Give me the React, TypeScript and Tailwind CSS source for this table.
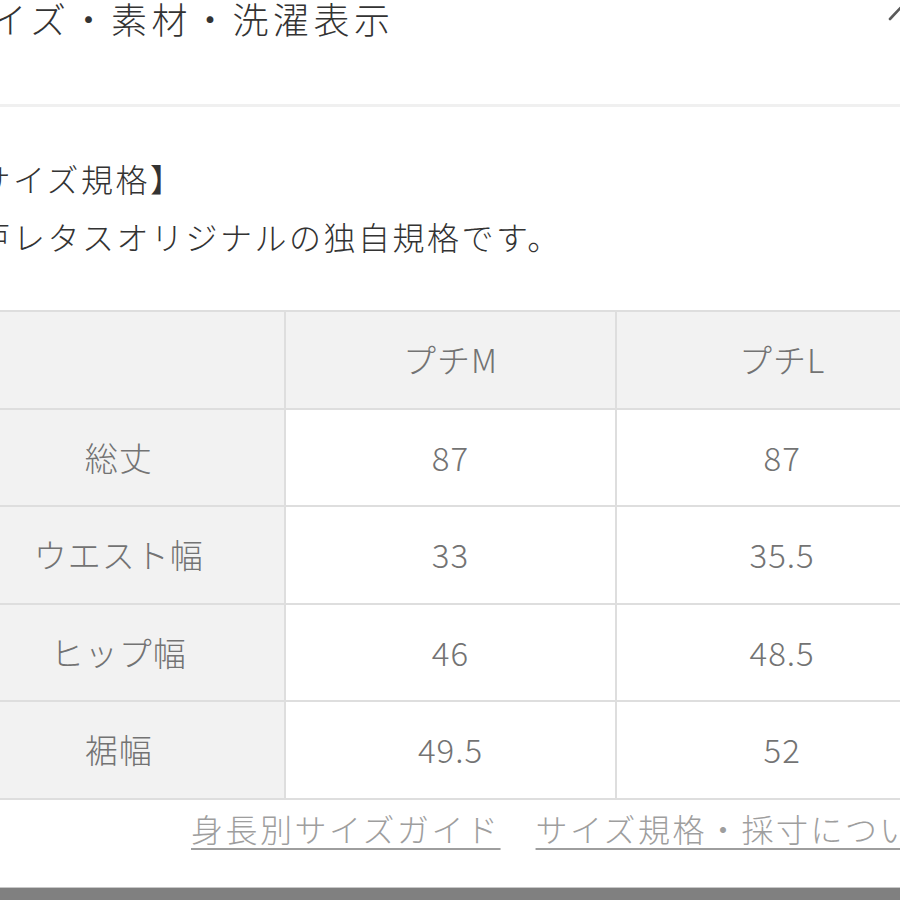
import React from "react";

const rows: [string, string, string][] = [
  ["総丈", "87", "87"],
  ["ウエスト幅", "33", "35.5"],
  ["ヒップ幅", "46", "48.5"],
  ["裾幅", "49.5", "52"],
];

export default function App() {
  const font = { fontFamily: '"Noto Sans CJK JP", "Noto Sans", sans-serif' };
  return (
    <div className="w-[900px] h-[900px] overflow-hidden bg-white relative font-light" style={font}>
      <div className="flex flex-col w-[997px] ml-[-48px]">
        {/* header */}
        <div className="flex items-start justify-between h-[107px] border-b-[3px] border-[#f0f0f0]">
          <div className="ml-[-2px] text-[36px] leading-[36px] tracking-[4.5px] text-[#333333] whitespace-nowrap">
            サイズ・素材・洗濯表示
          </div>
          <svg width="40" height="30" viewBox="0 0 40 30" className="mr-[29px] shrink-0">
            <path d="M10 19 L24 4 L38 19" fill="none" stroke="#5a5a5a" strokeWidth="2.6" strokeLinecap="round" strokeLinejoin="round" />
          </svg>
        </div>

        {/* description */}
        <div className="mt-[42px] ml-[-8px] text-[32px] leading-[58px] tracking-[2.5px] text-[#333333] whitespace-nowrap">
          <div>【サイズ規格】</div>
          <div>神戸レタスオリジナルの独自規格です。</div>
        </div>

        {/* table */}
        <div className="mt-[45px] grid grid-cols-3 border-t-2 border-l-2 border-[#dedede] text-[33px] tracking-[1px] text-[#737373]">
          <div className="h-[97.6px] bg-[#f2f2f2] border-r-2 border-b-2 border-[#dedede]" />
          <div className="h-[97.6px] flex items-center justify-center bg-[#f2f2f2] border-r-2 border-b-2 border-[#dedede]">プチM</div>
          <div className="h-[97.6px] flex items-center justify-center bg-[#f2f2f2] border-r-2 border-b-2 border-[#dedede]">プチL</div>
          {rows.map((r) => (
            <React.Fragment key={r[0]}>
              <div className="h-[97.6px] flex items-center justify-center bg-[#f2f2f2] border-r-2 border-b-2 border-[#dedede]">{r[0]}</div>
              <div className="h-[97.6px] flex items-center justify-center bg-white border-r-2 border-b-2 border-[#dedede]">{r[1]}</div>
              <div className="h-[97.6px] flex items-center justify-center bg-white border-r-2 border-b-2 border-[#dedede]">{r[2]}</div>
            </React.Fragment>
          ))}
        </div>

        {/* links */}
        <div className="mt-[8px] pl-[239px] flex gap-[35px] text-[32px] leading-[40px] tracking-[2.5px] text-[#9e9e9e] whitespace-nowrap">
          <span className="underline decoration-2 underline-offset-[6px]">身長別サイズガイド</span>
          <span className="underline decoration-2 underline-offset-[6px]">サイズ規格・採寸について</span>
        </div>
      </div>

      {/* bottom bar */}
      <div className="mt-[39px] h-[20px] border-t border-[#c8c8c8] bg-[#808080]" />
    </div>
  );
}
